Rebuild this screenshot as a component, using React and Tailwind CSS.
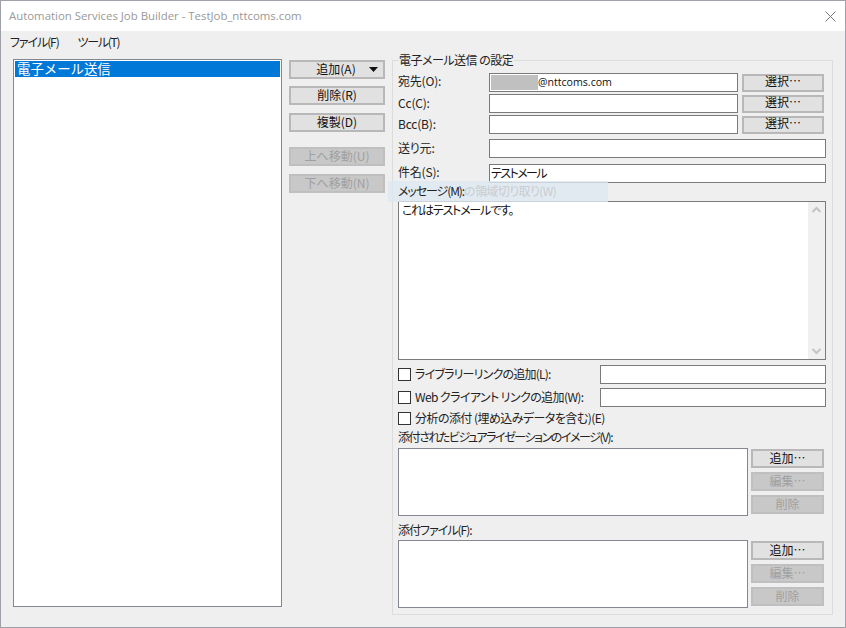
import React from 'react';

const cjk = "font-['Noto_Sans_CJK_JP','Noto_Sans',sans-serif] [font-feature-settings:'palt']";

function Btn({ children, disabled, className = '' }) {
  return (
    <div
      className={`flex items-center justify-center border-2 text-[12px] leading-none ${
        disabled ? 'bg-[#c8c8c8] border-[#bfbfbf] text-[#a0a0a0]' : 'bg-[#e1e1e1] border-[#b8b8b8] text-[#111]'
      } ${className}`}
    >
      {children}
    </div>
  );
}

function Field({ className = '', children }) {
  return (
    <div className={`flex items-center h-[19px] bg-white border border-[#7a7a7a] pl-[1px] pb-px text-[12px] leading-none text-[#111] ${className}`}>
      {children}
    </div>
  );
}

function Row({ label, labelClass = 'pb-[2px]', className = '', children }) {
  return (
    <div className={`flex items-center h-[19px] ${className}`}>
      <span className={`w-[91px] text-[12px] leading-none tracking-[-0.2px] text-[#222] ${labelClass}`}>{label}</span>
      {children}
    </div>
  );
}

function Check({ label, labelClass = '', className = '', children }) {
  return (
    <div className={`flex items-center h-[19px] ${className}`}>
      <span className="w-[13px] h-[13px] bg-white border border-[#333] shrink-0" />
      <span className={`ml-[4px] w-[185px] pb-[2px] text-[12px] leading-none text-[#222] whitespace-nowrap ${labelClass}`}>{label}</span>
      {children}
    </div>
  );
}

function AttachBox() {
  return (
    <div className="flex h-[68px]">
      <div className="w-[350px] bg-white border border-[#828790]" />
      <div className="ml-[3px] mt-px w-[73px] flex flex-col gap-[4px]">
        <Btn className="h-[19px] pb-[2px]">追加…</Btn>
        <Btn disabled className="h-[19px] pb-[2px]">編集…</Btn>
        <Btn disabled className="h-[19px] pb-px">削除</Btn>
      </div>
    </div>
  );
}

export default function App() {
  return (
    <div className={`relative w-[846px] h-[628px] flex flex-col bg-[#efefef] border border-[#a0a0a8] overflow-hidden ${cjk}`}>
      {/* title bar */}
      <div className="flex items-center justify-between h-[30px] bg-white pl-[8px] pr-[9px]">
        <span className="font-['Open_Sans',sans-serif] text-[11.4px] text-[#999]">
          Automation Services Job Builder - TestJob_nttcoms.com
        </span>
        <svg width="11" height="11" viewBox="0 0 11 11" className="text-[#777]">
          <path d="M0.5 0.5L10.5 10.5M10.5 0.5L0.5 10.5" stroke="currentColor" strokeWidth="1" fill="none" />
        </svg>
      </div>

      {/* menu */}
      <div className="flex items-center gap-[19px] h-[24px] pl-[9px] pb-[2px] text-[12px] text-[#222]">
        <span className="tracking-[-1.1px]">ファイル(F)</span>
        <span className="tracking-[-1.3px]">ツール(T)</span>
      </div>

      <div className="flex pl-[12px] pt-[4px]">
        {/* job list */}
        <div className="w-[269px] h-[548px] bg-white border border-[#828790] p-px">
          <div className="h-[16px] bg-[#0078d7] pl-[2px] text-[13.4px] leading-[15px] text-white [font-feature-settings:normal]">電子メール送信</div>
        </div>

        {/* job buttons */}
        <div className="ml-[7px] w-[96px] flex flex-col pt-px">
          <Btn className="relative h-[19px] pb-[2px] pr-[2px]">
            追加(A)
            <svg width="9" height="5" viewBox="0 0 9 5" className="absolute right-[5px] top-[5px]">
              <path d="M0 0H9L4.5 5Z" fill="#111" />
            </svg>
          </Btn>
          <Btn className="h-[19px] mt-[7px] pb-[2px]">削除(R)</Btn>
          <Btn className="h-[19px] mt-[8px] pb-[2px]">複製(D)</Btn>
          <Btn disabled className="h-[19px] mt-[15px] pb-[2px]">上へ移動(U)</Btn>
          <Btn disabled className="h-[19px] mt-[8px] pb-[2px]">下へ移動(N)</Btn>
        </div>

        {/* settings */}
        <div className="relative ml-[7px] mt-px w-[441px] h-[555px] border border-[#dcdcdc] pl-[5px] pt-[12px]">
          <span className="absolute left-[5px] -top-[7px] px-px bg-[#efefef] text-[12px] leading-none tracking-[-0.5px] text-[#222]">
            電子メール送信 の設定
          </span>

          <Row label="宛先(O):" labelClass="pb-[3px]">
            <Field className="w-[249px]">
              <span className="w-[47px] h-[15px] bg-[#c0c0c0]" />
              <span className="font-['Open_Sans',sans-serif] text-[10.6px]">@nttcoms.com</span>
            </Field>
            <Btn className="ml-[4px] w-[82px] h-[18px] pb-[3px]">選択…</Btn>
          </Row>
          <Row label="Cc(C):" className="mt-[2px]">
            <Field className="w-[249px]" />
            <Btn className="ml-[4px] w-[82px] h-[18px] pb-[3px]">選択…</Btn>
          </Row>
          <Row label="Bcc(B):" className="mt-[2px]">
            <Field className="w-[249px]" />
            <Btn className="ml-[4px] w-[82px] h-[18px] pb-[3px]">選択…</Btn>
          </Row>
          <Row label="送り元:" className="mt-[5px]">
            <Field className="w-[337px]" />
          </Row>
          <Row label="件名(S):" labelClass="pb-[3px]" className="mt-[6px]">
            <Field className="w-[337px] tracking-[-1.6px]">テストメール</Field>
          </Row>
          <div className="relative z-10 flex items-center h-[18px] pb-[2px] text-[12px] leading-none tracking-[-1.1px] text-[#222]">メッセージ(M):</div>

          {/* message */}
          <div className="flex w-[428px] h-[159px] bg-white border border-[#7a7a7a]">
            <div className="flex-1 pl-[3px] text-[12px] leading-[16px] tracking-[-1.2px] text-[#111]">これはテストメールです。</div>
            <div className="w-[17px] flex flex-col justify-between bg-[#f0f0f0] text-[#c4c4c4]">
              <svg width="17" height="17" viewBox="0 0 17 17">
                <path d="M4.5 10L8.5 6L12.5 10" stroke="currentColor" strokeWidth="2" fill="none" />
              </svg>
              <svg width="17" height="17" viewBox="0 0 17 17">
                <path d="M4.5 7L8.5 11L12.5 7" stroke="currentColor" strokeWidth="2" fill="none" />
              </svg>
            </div>
          </div>

          <Check label="ライブラリーリンクの追加(L):" labelClass="tracking-[-0.8px]" className="mt-[5px]">
            <Field className="w-[226px]" />
          </Check>
          <Check label="Web クライアント リンクの追加(W):" labelClass="tracking-[-0.6px]" className="mt-[4px]">
            <Field className="w-[226px]" />
          </Check>
          <Check label="分析の添付 (埋め込みデータを含む)(E)" labelClass="tracking-[-0.55px]" className="mt-[2px]" />

          <div className="flex items-center h-[20px] pb-[2px] text-[12px] leading-none tracking-[-1.45px] text-[#222]">
            添付されたビジュアライゼーションのイメージ(V):
          </div>
          <AttachBox />
          <div className="flex items-end h-[24px] pb-[4px] text-[12px] leading-none tracking-[-1px] text-[#222]">添付ファイル(F):</div>
          <AttachBox />
        </div>
      </div>

      {/* ghost menu item left over from the capture */}
      <div className="absolute left-[387px] top-[180px] w-[220px] h-[21px] bg-[#dfe8f1]/80 pl-[76px] pb-[2px] flex items-center text-[12px] tracking-[-0.6px] text-[#c9ccd0]">
        の領域切り取り(W)
      </div>

      {/* bits of the windows behind, showing through the edge */}
      <div className="absolute -top-px left-[608px] w-[29px] h-px bg-[#5558a8]" />
      <div className="absolute -top-px left-[717px] w-[30px] h-px bg-[#5558a8]" />
      <div className="absolute -right-px top-[67px] w-px h-[73px] bg-[#5558a8]" />
      <div className="absolute -right-px top-[308px] w-px h-[65px] bg-[#5558a8]" />
      <div className="absolute -right-px top-[512px] w-px h-[4px] bg-[#5558a8]" />
      <div className="absolute -right-px top-[530px] w-px h-[3px] bg-[#5558a8]" />
      <div className="absolute -left-px top-[339px] w-px h-px bg-[#444]" />
      <div className="absolute -left-px top-[350px] w-px h-px bg-[#444]" />
    </div>
  );
}
